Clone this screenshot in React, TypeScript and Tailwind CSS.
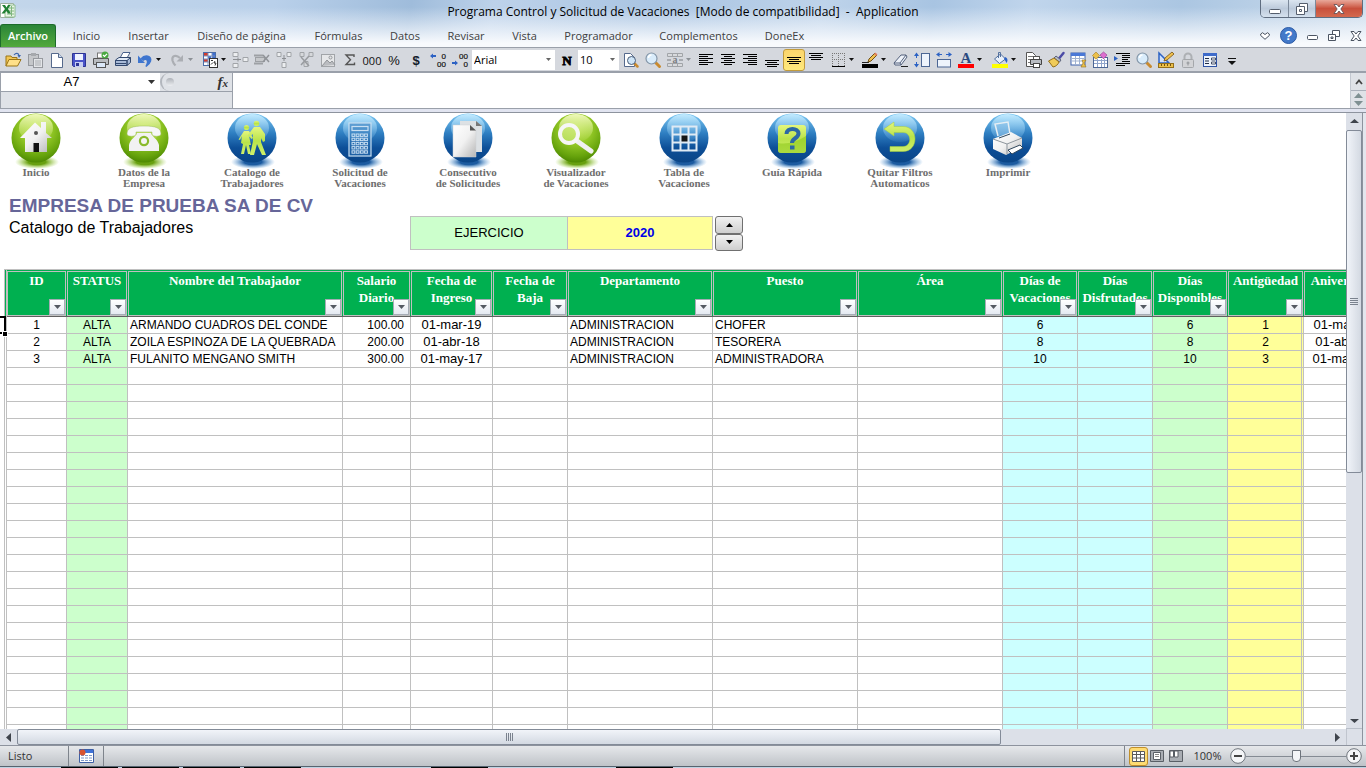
import type { ReactNode } from 'react'

const tabs = [
  { label: 'Inicio', width: 'w-[57px]' },
  { label: 'Insertar', width: 'w-[67px]' },
  { label: 'Diseño de página', width: 'w-[119px]' },
  { label: 'Fórmulas', width: 'w-[75px]' },
  { label: 'Datos', width: 'w-[58px]' },
  { label: 'Revisar', width: 'w-[64px]' },
  { label: 'Vista', width: 'w-[53px]' },
  { label: 'Programador', width: 'w-[95px]' },
  { label: 'Complementos', width: 'w-[105px]' },
  { label: 'DoneEx', width: 'w-[67px]' },
]

/* ---------- toolbar ---------- */

function Tool({ label, active, children }: { label: string; active?: boolean; children: ReactNode }) {
  return (
    <button
      type="button"
      aria-label={label}
      className={`flex h-[22px] w-[22px] shrink-0 items-center justify-center rounded-[3px] border ${
        active ? 'border-[#c29b3c] bg-linear-to-b from-[#fbd56c] to-[#ffe97c]' : 'border-transparent'
      }`}
    >
      <svg width="16" height="16" viewBox="0 0 16 16" className="shrink-0 overflow-visible" fill="none">
        {children}
      </svg>
    </button>
  )
}

function Arrow({ label, width = 'w-2.5', off }: { label: string; width?: string; off?: boolean }) {
  return (
    <button type="button" aria-label={label} className={`flex h-[22px] shrink-0 items-center justify-start ${width}`}>
      <svg width="5" height="3" viewBox="0 0 5 3" className="shrink-0">
        <path d="M0 0h5L2.5 3z" fill={off ? '#8c9196' : '#111'} />
      </svg>
    </button>
  )
}

function Lines({ rows }: { rows: [number, number, number][] }) {
  return (
    <>
      {rows.map(([x, y, w]) => (
        <rect key={y} x={x} y={y} width={w} height="1" fill="#000" />
      ))}
    </>
  )
}

function Lens() {
  return (
    <>
      <path d="M10.5 10.5l4 4" stroke="#c98a2e" strokeWidth="3" strokeLinecap="round" />
      <circle cx="6.5" cy="6.5" r="5.5" fill="#d9ecfb" stroke="#8496a8" strokeWidth="1.2" />
      <path d="M3.5 6a3 3 0 013-3" stroke="#fff" strokeWidth="1.5" />
    </>
  )
}

function Page() {
  return (
    <>
      <path d="M2.5 1.5h7l4 4v10h-11z" fill="#fff" stroke="#55698c" />
      <path d="M9.5 1.5v4h4" fill="#cfdbee" stroke="#55698c" />
    </>
  )
}

function Digits({ top, bottom, arrow }: { top: string; bottom: string; arrow: 'left' | 'right' }) {
  return (
    <>
      <text x="16" y="7" textAnchor="end" fontSize="8" fontFamily="Liberation Sans, sans-serif" fill="#111" stroke="#111" strokeWidth=".2">{top}</text>
      <text x="16" y="15" textAnchor="end" fontSize="8" fontFamily="Liberation Sans, sans-serif" fill="#111" stroke="#111" strokeWidth=".2">{bottom}</text>
      {arrow === 'left' ? (
        <path d="M0 4l3-2.5V3h3v2H3v1.5z" fill="#2c62c4" />
      ) : (
        <path d="M6 11L3 8.5V10H0v2h3v1.5z" fill="#2c62c4" />
      )}
    </>
  )
}

function Toolbar() {
  return (
    <div className="flex h-[26px] shrink-0 items-center border-t border-b-2 border-[#9aa0aa] bg-[#d5d8de] pl-0.5">
      <Tool label="Abrir">
        <path d="M1 14V4h5l1 1.5h5V8" fill="#f3c653" stroke="#9a7416" />
        <path d="M1 14l3-6.5h12L12.5 14z" fill="#ffe08a" stroke="#9a7416" />
        <path d="M9 3c2-2.5 4.5-2 5 .5" stroke="#3e66ad" strokeWidth="1.2" />
        <path d="M12.5 3h3.5l-2 3z" fill="#3e66ad" />
      </Tool>
      <Tool label="Pegar">
        <rect x="1.5" y="2.5" width="10" height="11" fill="#c5c7ca" stroke="#96999e" />
        <rect x="4" y="1" width="5" height="3" fill="#a6a9ad" />
        <rect x="6.5" y="6.5" width="9" height="9" fill="#e3e5e8" stroke="#96999e" />
        <path d="M8 9h6M8 11h6M8 13h6" stroke="#a9acb0" />
      </Tool>
      <Tool label="Nuevo"><Page /></Tool>
      <Tool label="Guardar">
        <path d="M1.5 1.5h13v13h-12l-1-1z" fill="#4a54c8" stroke="#2d3494" />
        <rect x="4" y="2" width="8" height="6" fill="#eef2ff" />
        <rect x="4" y="10" width="8" height="5" fill="#c8cff2" />
        <rect x="5" y="11" width="3" height="3" fill="#2d3494" />
      </Tool>
      <Tool label="Impresión rápida">
        <rect x="4.5" y="1" width="7" height="5" fill="#fff" stroke="#777" />
        <path d="M.5 6.5h15v6H.5z" fill="#b9bcc0" stroke="#555" />
        <rect x="3.5" y="10.5" width="9" height="5" fill="#dbe8f8" stroke="#555" />
        <circle cx="12" cy="3" r="3.5" fill="#49a942" />
        <path d="M10 3l1.5 1.5L14 1.8" stroke="#fff" strokeWidth="1.2" />
      </Tool>
      <Tool label="Imprimir">
        <path d="M5 6l3-5.5h7L12 6z" fill="#fff" stroke="#4a618c" />
        <path d="M.5 8L4 5.5h11.5L12 9H.5z" fill="#e1e9f5" stroke="#33496f" />
        <path d="M.5 8.5h11.5v5H.5zM12 8.5l3.5-3v5L12 13.5z" fill="#a9bbd8" stroke="#33496f" />
        <path d="M1 11.5h10" stroke="#33496f" />
      </Tool>
      <Tool label="Deshacer">
        <path d="M4 7c4-5 11-3 9.5 2-.8 2.5-2.500 4-4.500 5.500 1.500-3 2.500-6 .5-7-1.500-.7-2.500 0-3.500 1" fill="#3f76cf" stroke="#3f76cf" strokeWidth="1.5" />
        <path d="M1 3.5V11h7z" fill="#3f76cf" />
      </Tool>
      <Arrow label="Opciones de deshacer" />
      <Tool label="Rehacer">
        <path d="M11 6C7 2 2.5 4 3.5 8.5c.5 2 1.5 3.5 3 5" stroke="#abaeb3" strokeWidth="2.2" />
        <path d="M14 3v6.5H7.5z" fill="#abaeb3" />
      </Tool>
      <Arrow label="Opciones de rehacer" width="w-[11px]" off />
      <Tool label="Formato condicional">
        <rect x="1.5" y=".5" width="12" height="13" fill="#fff" stroke="#4d6ea8" />
        <rect x="2" y="1" width="4" height="3" fill="#d23b2c" /><rect x="2" y="7" width="4" height="3" fill="#d23b2c" />
        <rect x="6" y="4" width="3" height="3" fill="#3f6fd1" /><rect x="10" y="1" width="3" height="5" fill="#3f6fd1" />
        <path d="M2 4h11M2 7h11M2 10h11M6 1v12M10 1v12" stroke="#7d94bd" />
        <rect x="7.5" y="6.5" width="8" height="9" fill="#fff" stroke="#333" />
        <path d="M9 8.5h2M9 12.5l2-2M13 9l-1 2h2l-1 2.5" stroke="#333" />
      </Tool>
      <Arrow label="Opciones de formato" width="w-2" />
      <Tool label="Insertar filas">
        <path d="M1 .5h5v4H1zM1 11.5h5v4H1zM11 5.5h5v4h-5z" fill="#eceef0" stroke="#a1a4a8" />
        <path d="M1 7.5h8M6 5.5v4" stroke="#8b8e92" />
      </Tool>
      <Tool label="Eliminar filas">
        <path d="M0 3.5h9M0 11.5h9" stroke="#9da0a4" strokeWidth="2" />
        <rect x="1.5" y="5.5" width="9" height="4" fill="#c6c8cb" stroke="#9da0a4" />
        <path d="M9 3l6 7M15 3L9 10" stroke="#909398" strokeWidth="1.5" />
      </Tool>
      <Tool label="Insertar columnas">
        <path d="M1 .5h4v4H1zM11 .5h4v4h-4zM6 10.5h4v5H6z" fill="#eceef0" stroke="#a1a4a8" />
        <path d="M8 3v6M6 6.5h4" stroke="#8b8e92" />
      </Tool>
      <Tool label="Eliminar columnas">
        <path d="M2 .5h4v4H2zM11 .5h4v4h-4zM6 9.5h4v5H6z" fill="#d6d8db" stroke="#a1a4a8" />
        <path d="M3 5l8 9M11 4l-8 9" stroke="#989b9f" strokeWidth="1.5" />
      </Tool>
      <Tool label="Imagen">
        <rect x="1.5" y="2.5" width="13" height="12" fill="#e6e7e9" stroke="#a1a4a8" />
        <path d="M2 14l5-6 3 3 2-2 3 4" fill="#babcc0" stroke="#93969a" />
        <circle cx="10.5" cy="5.5" r="1.5" stroke="#93969a" />
      </Tool>
      <Tool label="Autosuma">
        <path d="M12 5V3H4l4.5 4.8L4 12.5h8.5v-2" stroke="#555" strokeWidth="1.4" />
      </Tool>
      <Tool label="Millares">
        <text x="8" y="13" textAnchor="middle" fontSize="11" fontFamily="Open Sans, sans-serif" fill="#111">000</text>
      </Tool>
      <Tool label="Porcentaje">
        <text x="8" y="13" textAnchor="middle" fontSize="13" fontFamily="Liberation Sans, sans-serif" fill="#111">%</text>
      </Tool>
      <Tool label="Moneda">
        <text x="8" y="13" textAnchor="middle" fontSize="13" fontWeight="bold" fontFamily="Liberation Sans, sans-serif" fill="#14202c">$</text>
      </Tool>
      <Tool label="Aumentar decimales"><Digits top="0" bottom="00" arrow="left" /></Tool>
      <Tool label="Disminuir decimales"><Digits top="00" bottom="0" arrow="right" /></Tool>

      <div className="relative ml-px h-5 w-[83px] shrink-0">
        <select aria-label="Fuente" defaultValue="Arial" className="block h-5 w-full appearance-none bg-white pl-0.5 font-['Open_Sans',sans-serif] text-[11px] leading-5 text-black">
          <option>Arial</option>
        </select>
        <svg width="5" height="3" viewBox="0 0 5 3" className="pointer-events-none absolute top-2 right-1"><path d="M0 0h5L2.5 3z" fill="#666" /></svg>
      </div>
      <Tool label="Negrita">
        <text x="9" y="13" textAnchor="middle" fontSize="13" fontWeight="bold" fontFamily="Liberation Serif, serif" fill="#000" stroke="#000" strokeWidth=".8">N</text>
      </Tool>
      <div className="relative mr-px ml-px h-5 w-[41px] shrink-0">
        <select aria-label="Tamaño de fuente" defaultValue="10" className="block h-5 w-full appearance-none bg-white pl-0.5 font-['Open_Sans',sans-serif] text-[11px] leading-5 text-black">
          <option>10</option>
        </select>
        <svg width="5" height="3" viewBox="0 0 5 3" className="pointer-events-none absolute top-2 right-1"><path d="M0 0h5L2.5 3z" fill="#666" /></svg>
      </div>

      <Tool label="Vista preliminar">
        <path d="M1.5 1.5h6l4 4v9h-10z" fill="#fff" stroke="#55698c" />
        <path d="M11.5 11.5l3 3" stroke="#c98a2e" strokeWidth="2.5" strokeLinecap="round" />
        <circle cx="8.5" cy="8.5" r="4" fill="#cfe5f7" stroke="#4a5d78" />
      </Tool>
      <Tool label="Zoom"><Lens /></Tool>
      <Tool label="Combinar y centrar">
        <path d="M.5 1.5h15v3H.5zM.5 11.5h15v3H.5z" fill="#d8dadd" stroke="#a1a4a8" />
        <path d="M5.5 1.5v3M10.5 1.5v3M5.5 11.5v3M10.5 11.5v3" stroke="#a1a4a8" />
        <path d="M0 8h4M12 8h4" stroke="#7b7e82" />
        <text x="8" y="11" textAnchor="middle" fontSize="10" fontWeight="bold" fontFamily="Liberation Serif, serif" fill="#7b7e82">a</text>
      </Tool>
      <Arrow label="Opciones de combinar" width="w-[9px]" off />
      <Tool label="Alinear a la izquierda"><Lines rows={[[1, 2, 14], [1, 4, 9], [1, 6, 14], [1, 8, 9], [1, 10, 14], [1, 12, 9]]} /></Tool>
      <Tool label="Centrar"><Lines rows={[[1, 2, 14], [4, 4, 8], [1, 6, 14], [4, 8, 8], [1, 10, 14], [4, 12, 8]]} /></Tool>
      <Tool label="Alinear a la derecha"><Lines rows={[[1, 2, 14], [6, 4, 9], [1, 6, 14], [6, 8, 9], [1, 10, 14], [6, 12, 9]]} /></Tool>
      <Tool label="Alinear en la parte inferior"><Lines rows={[[1, 8, 14], [3, 10, 10], [1, 12, 14], [3, 14, 10]]} /></Tool>
      <Tool label="Alinear en el medio" active><Lines rows={[[1, 5, 14], [3, 7, 10], [1, 9, 14], [3, 11, 10]]} /></Tool>
      <Tool label="Alinear en la parte superior"><Lines rows={[[1, 1, 14], [3, 3, 10], [1, 5, 14], [3, 7, 10]]} /></Tool>
      <Tool label="Bordes">
        <path d="M2 1.5h13M2 7.5h13M2.5 1v13M8.5 1v13M14.5 1v13" stroke="#777" strokeDasharray="1 1" />
        <path d="M2 14.5h13" stroke="#000" />
      </Tool>
      <Arrow label="Opciones de bordes" />
      <Tool label="Color de línea">
        <path d="M0 10.5h7" stroke="#222" />
        <path d="M6 10l1-3 6-6 2 2-6 6z" fill="#f0c04e" stroke="#735112" />
        <path d="M12 2l2 2 1.5-1.5-2-2z" fill="#e07f62" />
        <rect x="0" y="12" width="16" height="4" fill="#000" />
      </Tool>
      <Arrow label="Opciones de línea" width="w-2" />
      <Tool label="Borrar">
        <path d="M2 11l7-8h5l1 2-6 8H3z" fill="#eef2f9" stroke="#53617c" />
        <path d="M2 11h6l6-8M8 11l1 2" stroke="#53617c" />
        <path d="M9 14.5h7" stroke="#222" />
      </Tool>
      <Tool label="Alto de fila">
        <rect x="7.5" y="1.5" width="8" height="13" fill="#eef4fc" stroke="#4c6694" />
        <path d="M2.5 2v4M2.5 10v4" stroke="#2c62c4" />
        <path d="M0 4l2.5-3.5L5 4zM0 12l2.5 3.5L5 12z" fill="#2c62c4" />
      </Tool>
      <Tool label="Ancho de columna">
        <rect x="1.5" y="7.5" width="13" height="7.5" fill="#eef4fc" stroke="#4c6694" />
        <path d="M1 2.5h5M10 2.5h5" stroke="#2c62c4" />
        <path d="M3.5 0L0 2.5 3.5 5zM12.5 0L16 2.5 12.5 5z" fill="#2c62c4" />
      </Tool>
      <Tool label="Color de fuente">
        <text x="8" y="11" textAnchor="middle" fontSize="15" fontWeight="bold" fontFamily="Liberation Serif, serif" fill="#2b4a80">A</text>
        <rect x="0" y="12" width="16" height="4" fill="#f00" />
      </Tool>
      <Arrow label="Opciones de color de fuente" width="w-3" />
      <Tool label="Color de relleno">
        <path d="M2.5 7l6-5 5 5-6 4.5z" fill="#e9f0fa" stroke="#53719f" />
        <path d="M6.5 6V.5h2V5" stroke="#53719f" />
        <path d="M13 5c3 1 3 4 1.5 6-1-2-1.5-3-2.5-4z" fill="#2c62c4" />
        <rect x="0" y="12" width="16" height="4" fill="#ff0" />
      </Tool>
      <Arrow label="Opciones de relleno" width="w-3" />
      <Tool label="Área de impresión">
        <path d="M.5.5h6l3 3v11h-9z" fill="#fff" stroke="#555" />
        <path d="M2 4.5h5M2 7.5h3M2 10.5h3" stroke="#777" />
        <rect x="7.5" y="4.5" width="6" height="3" fill="#fff" stroke="#555" />
        <path d="M4.5 7.5h11v5h-11z" fill="#b8bcc2" stroke="#444" />
        <rect x="7.5" y="11.5" width="6" height="4" fill="#fff" stroke="#444" />
      </Tool>
      <Tool label="Copiar formato">
        <path d="M15.5 1L11 6.5" stroke="#4b4ba6" strokeWidth="2.5" strokeLinecap="round" />
        <path d="M8 4l5 4-1.5 2-5.5-4z" fill="#b3b9c9" stroke="#5c6378" />
        <path d="M6 6L.5 9l4.5 6c3-.5 5-2.5 6-5z" fill="#f0cb58" stroke="#94701c" />
      </Tool>
      <Tool label="Tabla">
        <rect x="1" y="1" width="14" height="12" fill="#fff" stroke="#3e62ad" />
        <rect x="1" y="1" width="14" height="3" fill="#4a78d6" />
        <path d="M2 6.5h12M2 9h12M5.5 4v9M9.5 4v9" stroke="#9fb1d0" />
        <path d="M12 8h4l-2 3 2 4h-5l2-4z" fill="#ecc04a" stroke="#94701c" strokeWidth=".6" />
      </Tool>
      <Tool label="Calendario">
        <rect x="1.5" y="5.5" width="14" height="10" fill="#fff" stroke="#4c6694" />
        <path d="M2 8.5h13M2 11.5h13M5.5 7v8M9.5 7v8M12.5 7v8" stroke="#8fa4cb" />
        <path d="M4 0l3.5 3.5L4.500 7h-1L.5 3.500z" fill="#ecc04a" stroke="#a27c1e" strokeWidth=".6" strokeLinejoin="round" />
        <path d="M11.500 0L15 3l-3 3.500h-1L8 3z" fill="#dc6fd0" stroke="#93358a" strokeWidth=".6" strokeLinejoin="round" />
      </Tool>
      <Tool label="Aumentar sangría">
        <Lines rows={[[2, 1, 14], [8, 3, 8], [8, 5, 8], [8, 7, 6], [8, 9, 8], [2, 11, 14], [2, 13, 9]]} />
        <path d="M0 4l4 2.5L0 9z" fill="#2c62c4" />
      </Tool>
      <Tool label="Buscar"><Lens /></Tool>
      <Tool label="Modo diseño">
        <path d="M1 1v10h10z" fill="#cfe0fa" stroke="#2c62c4" strokeWidth="1.5" />
        <path d="M6 9l1-3 7-6 2 2-7 6z" fill="#f0c04e" stroke="#735112" strokeWidth=".8" />
        <rect x=".5" y="11.5" width="15" height="4" fill="#ecc04a" stroke="#94701c" />
        <path d="M3.5 12v2M6.5 12v2M9.5 12v2M12.5 12v2" stroke="#735112" />
      </Tool>
      <Tool label="Proteger hoja">
        <path d="M4.5 8V5a3.5 3.5 0 017 0v3" stroke="#adb0b4" strokeWidth="2" />
        <rect x="2.5" y="7.5" width="11" height="8" rx="1" fill="#d2d3d6" stroke="#a4a7ab" />
        <path d="M8 9.5v4M6.5 11h3" stroke="#8f9296" />
      </Tool>
      <Tool label="Formulario">
        <rect x="1.5" y="1.5" width="13" height="13" fill="#eef4fc" stroke="#2d52a4" />
        <rect x="1" y="1" width="14" height="3" fill="#3e6bca" />
        <path d="M3 6.5h4M3 9h4M3 11.5h4" stroke="#1f2c46" />
        <path d="M9.5 6h4v2h-4zM9.5 10h4v2h-4z" fill="#fff" stroke="#1f2c46" strokeWidth=".8" />
      </Tool>
      <Tool label="Personalizar barra">
        <path d="M4 6.500h8" stroke="#111" />
        <path d="M4 9h8l-4 4z" fill="#111" />
      </Tool>
    </div>
  )
}

/* ---------- navigation balls ---------- */

function Ball({ color, children }: { color: 'green' | 'blue'; children: ReactNode }) {
  return (
    <svg width="52" height="54" viewBox="0 0 52 54" className="shrink-0 overflow-visible">
      <ellipse cx="27" cy="49" rx="22" ry="7" fill={`url(#shadow-${color})`} />
      <circle cx="26" cy="25" r="24.5" fill={`url(#ball-${color})`} />
      <ellipse cx="26" cy="15" rx="17" ry="14" fill={`url(#gloss-${color})`} />
      {children}
    </svg>
  )
}

function BallDefs() {
  return (
    <svg width="0" height="0" className="absolute" aria-hidden="true">
      <defs>
        <radialGradient id="ball-green" cx=".5" cy=".3" r=".72">
          <stop offset="0" stopColor="#b4de45" /><stop offset=".45" stopColor="#93c826" />
          <stop offset=".8" stopColor="#66a30c" /><stop offset="1" stopColor="#4a8500" />
        </radialGradient>
        <linearGradient id="ball-blue" x1="0" y1="0" x2="0" y2="1">
          <stop offset="0" stopColor="#7cc8f3" /><stop offset=".4" stopColor="#2f7fc2" />
          <stop offset=".7" stopColor="#0d4f98" /><stop offset="1" stopColor="#0a4587" />
        </linearGradient>
        <linearGradient id="gloss-green" x1="0" y1="0" x2="0" y2="1">
          <stop offset="0" stopColor="#f4fbc4" stopOpacity=".95" /><stop offset="1" stopColor="#d8ef80" stopOpacity=".1" />
        </linearGradient>
        <linearGradient id="gloss-blue" x1="0" y1="0" x2="0" y2="1">
          <stop offset="0" stopColor="#c6ecff" stopOpacity=".95" /><stop offset="1" stopColor="#7cc0ee" stopOpacity=".1" />
        </linearGradient>
        <radialGradient id="shadow-green">
          <stop offset=".4" stopColor="#68a010" /><stop offset="1" stopColor="#a5d44a" stopOpacity="0" />
        </radialGradient>
        <radialGradient id="shadow-blue">
          <stop offset=".4" stopColor="#1c5ba0" /><stop offset="1" stopColor="#5da0dc" stopOpacity="0" />
        </radialGradient>
        <linearGradient id="silver" x1="0" y1="0" x2="1" y2="1">
          <stop offset="0" stopColor="#fff" /><stop offset=".5" stopColor="#f1f1f1" /><stop offset="1" stopColor="#b5b5b5" />
        </linearGradient>
        <linearGradient id="lime" x1="0" y1="0" x2="0" y2="1">
          <stop offset="0" stopColor="#e4f77e" /><stop offset=".5" stopColor="#b9e34a" /><stop offset="1" stopColor="#cff06a" />
        </linearGradient>
      </defs>
    </svg>
  )
}

const calcKeys = [0, 1, 2, 3, 4].flatMap((r) => [0, 1, 2, 3].map((c) => ({ x: 18 + c * 4.2, y: 21 + r * 4.2 })))

const navItems: { lines: string[]; color: 'green' | 'blue'; art: ReactNode }[] = [
  {
    lines: ['Inicio'],
    color: 'green',
    art: (
      <>
        <path d="M10 25L25 9.5l6 5.5V9h5v11l6 5h-5v14H15V25z" fill="url(#silver)" />
        <rect x="23.5" y="30" width="5.5" height="9" fill="#111" />
        <circle cx="26" cy="20" r="2" fill="#555" />
      </>
    ),
  },
  {
    lines: ['Datos de la', 'Empresa'],
    color: 'green',
    art: (
      <>
        <path d="M9 21c0-6 5-8 17-8s17 2 17 8c0 3-9 3-9 0v-2H18v2c0 3-9 3-9 0z" fill="#f7f7f7" stroke="#9abb5e" strokeWidth=".5" />
        <path d="M19 20h14c0 3 7 6 8 12v6H11v-6c1-6 8-9 8-12z" fill="#f2f2f2" />
        <circle cx="26" cy="28" r="5.2" fill="#8aba2c" /><circle cx="26" cy="28" r="3" fill="#f4f4f4" />
      </>
    ),
  },
  {
    lines: ['Catalogo de', 'Trabajadores'],
    color: 'blue',
    art: (
      <g fill="url(#lime)">
        <circle cx="20.5" cy="14.5" r="2.6" /><circle cx="30.5" cy="10.5" r="2.8" />
        <path d="M18 18h5l4 7-1.5 1-2.5-3 2 9h-2l2 9h-3l-2-9-2 9h-3l2-10-2-1 1-7-2 4-1.500-.5z" />
        <path d="M28 14h6l5 7v7l-2 1-2-4v4l5 13h-4l-5-11-3 11h-4l3-14v-7l-4 3-1.5-1.5z" />
      </g>
    ),
  },
  {
    lines: ['Solicitud de', 'Vacaciones'],
    color: 'blue',
    art: (
      <g stroke="#c8dff2" strokeWidth="1.2" fill="none">
        <rect x="15" y="10" width="22" height="33" fill="#2f76b8" fillOpacity=".5" />
        <rect x="18" y="13.5" width="16" height="4" />
        {calcKeys.map(({ x, y }) => <rect key={`${x}-${y}`} x={x} y={y} width="2.800" height="2.400" strokeWidth="1" />)}
      </g>
    ),
  },
  {
    lines: ['Consecutivo', 'de Solicitudes'],
    color: 'blue',
    art: (
      <>
        <path d="M18 8h16l6 5v26H18z" fill="#dde1e4" /><path d="M34 8v5h6z" fill="#777" />
        <path d="M11 12h17l6 5.5V44H11z" fill="url(#silver)" stroke="#cfd2d4" strokeWidth=".5" />
        <path d="M28 12v5.5h6z" fill="#555" />
      </>
    ),
  },
  {
    lines: ['Visualizador', 'de Vacaciones'],
    color: 'green',
    art: (
      <>
        <path d="M27 28l14 10" stroke="#f0f0f0" strokeWidth="5" strokeLinecap="round" />
        <circle cx="19" cy="21" r="9" fill="#c9e876" fillOpacity=".6" stroke="#f6f6f6" strokeWidth="4" />
      </>
    ),
  },
  {
    lines: ['Tabla de', 'Vacaciones'],
    color: 'blue',
    art: (
      <>
        <rect x="22" y="21" width="8" height="8" fill="#151515" />
        <path d="M14.5 13.5h24v24h-24zM22.5 13.5v24M30.5 13.5v24M14.5 21.5h24M14.5 29.5h24" stroke="#dfeaf4" strokeWidth="2" fill="none" />
      </>
    ),
  },
  {
    lines: ['Guía Rápida'],
    color: 'blue',
    art: (
      <>
        <rect x="12" y="12" width="28" height="28" rx="3" fill="url(#lime)" />
        <path d="M12 30c10 2 20-2 28-7v14a3 3 0 01-3 3H15a3 3 0 01-3-3z" fill="#86c414" fillOpacity=".5" />
        <path d="M20.5 21c0-7 12-6.5 12-.5 0 5-6.5 4.500-6.500 9.500" stroke="#2b68a5" strokeWidth="4" fill="none" />
        <rect x="24" y="32.5" width="4.5" height="4" fill="#2b68a5" />
      </>
    ),
  },
  {
    lines: ['Quitar Filtros', 'Automaticos'],
    color: 'blue',
    art: (
      <path d="M10 16l10-7v4.5h9c16 0 16 25 0 25H16v-5h13c9 0 9-14 0-14h-9V23z" fill="url(#lime)" stroke="#a5cf3c" strokeWidth=".5" />
    ),
  },
  {
    lines: ['Imprimir'],
    color: 'blue',
    art: (
      <>
        <path d="M16 23l-3-12 13-2 2 12" fill="#8fc2e8" fillOpacity=".5" stroke="#e6eef4" strokeWidth="1.5" />
        <path d="M11 26l18-7 11 6v9l-16 8-13-6z" fill="url(#silver)" />
        <path d="M11 26l14 5 15-6M25 31v10" stroke="#8d959c" fill="none" />
        <path d="M17 25l11-4M26 37l12-5 3 3-11 6z" stroke="#30475c" fill="#fff" />
      </>
    ),
  },
]

function NavBar() {
  return (
    <nav className="flex h-[81px] shrink-0 gap-9">
      {navItems.map(({ lines, color, art }) => (
        <a key={lines[0]} href="#" className="flex w-[72px] shrink-0 flex-col items-center text-center font-['Liberation_Serif',serif] text-[11px] leading-[11px] font-bold whitespace-nowrap text-[#6e6e6e]">
          <Ball color={color}>{art}</Ball>
          {lines.map((line) => (
            <span key={line}>{line}</span>
          ))}
        </a>
      ))}
    </nav>
  )
}

/* ---------- employee table ---------- */

const columns = [
  { title: ['ID'], col: 'w-[60px]', cell: 'text-center' },
  { title: ['STATUS'], col: 'w-[61px]', cell: 'text-center bg-[#ccffcc]' },
  { title: ['Nombre del Trabajador'], col: 'w-[215px]', cell: 'pl-0.5' },
  { title: ['Salario', 'Diario'], col: 'w-[68px]', cell: 'text-right pr-1.5' },
  { title: ['Fecha de', 'Ingreso'], col: 'w-[82px]', cell: 'text-center text-[13px]' },
  { title: ['Fecha de', 'Baja'], col: 'w-[75px]', cell: 'text-center' },
  { title: ['Departamento'], col: 'w-[145px]', cell: 'pl-0.5' },
  { title: ['Puesto'], col: 'w-[145px]', cell: 'pl-0.5' },
  { title: ['Área'], col: 'w-[145px]', cell: '' },
  { title: ['Días de', 'Vacaciones'], col: 'w-[75px]', cell: 'text-center bg-[#ccffff]' },
  { title: ['Días', 'Disfrutados'], col: 'w-[75px]', cell: 'text-center bg-[#ccffff]' },
  { title: ['Días', 'Disponibles'], col: 'w-[75px]', cell: 'text-center bg-[#ccffcc]' },
  { title: ['Antigüedad'], col: 'w-[76px]', cell: 'text-center bg-[#ffff99] shadow-[inset_-1px_0_#ffff99,inset_-2px_0_#c0c0c0]' },
  { title: ['Aniversario'], col: 'w-[80px]', cell: 'text-center text-[13px]' },
]

const employees = [
  ['1', 'ALTA', 'ARMANDO CUADROS DEL CONDE', '100.00', '01-mar-19', '', 'ADMINISTRACION', 'CHOFER', '', '6', '', '6', '1', '01-mar-20'],
  ['2', 'ALTA', 'ZOILA ESPINOZA DE LA QUEBRADA', '200.00', '01-abr-18', '', 'ADMINISTRACION', 'TESORERA', '', '8', '', '8', '2', '01-abr-20'],
  ['3', 'ALTA', 'FULANITO MENGANO SMITH', '300.00', '01-may-17', '', 'ADMINISTRACION', 'ADMINISTRADORA', '', '10', '', '10', '3', '01-may-20'],
]

const rows = Array.from({ length: 25 }, (_, i) => employees[i] ?? [])

function EmployeeTable() {
  return (
    <div className="relative min-h-0 flex-1 overflow-hidden pl-1">
      <div className="w-max border-l border-[#c0c0c0]">
        <div className="border-t border-[#c0c0c0] bg-linear-to-b from-[#00b050] from-[46px] to-white to-[46px] pl-px">
          <table className="w-[1378px] table-fixed border-separate border-spacing-0 border-l border-[#c0c0c0] text-black">
            <colgroup>
              {columns.map((c) => (
                <col key={c.title.join()} className={c.col} />
              ))}
            </colgroup>
            <thead>
              <tr>
                {columns.map((c) => (
                  <th key={c.title.join()} scope="col" className="h-[47px] border-b border-[#606060] bg-[#00b050] p-0 pt-px pr-px">
                    <div className="relative h-[45px] border border-[#c0c0c0] font-['Liberation_Serif',serif] text-[13px] leading-[17px] font-bold whitespace-nowrap text-white">
                      {c.title.map((line) => (
                        <span key={line} className="-mx-1 block">{line}</span>
                      ))}
                      <button type="button" aria-label={`Filtrar ${c.title.join(' ')}`} className="absolute right-0 bottom-0 flex h-4 w-4 items-center justify-center border border-[#a5acb5] bg-linear-to-b from-white to-[#e4e9f1]">
                        <svg width="7" height="4" viewBox="0 0 7 4"><path d="M0 0h7L3.5 4z" fill="#555a62" /></svg>
                      </button>
                    </div>
                  </th>
                ))}
              </tr>
            </thead>
            <tbody className="font-['Liberation_Sans',Arial,sans-serif] text-[12px] leading-4">
              {rows.map((row, r) => (
                <tr key={r}>
                  {columns.map((c, i) => (
                    <td key={c.title.join()} className={`h-[17px] border-r border-b border-[#c0c0c0] whitespace-nowrap ${c.cell}`}>
                      <div className="h-4">{row[i]}</div>
                    </td>
                  ))}
                </tr>
              ))}
            </tbody>
          </table>
        </div>
      </div>
      {/* active cell marker */}
      <div className="absolute top-[47px] left-0 h-[18px] w-1.5 border-2 border-l-0 border-black" />
      <div className="absolute top-[62px] left-0.5 h-[6px] w-[6px] border border-white bg-black" />
    </div>
  )
}

function Triangle({ dir }: { dir: 'up' | 'down' | 'left' | 'right' }) {
  const d = { up: 'M0 6l4.5-4 4.5 4z', down: 'M0 3h9l-4.5 4z', left: 'M7 0v9L2 4.5z', right: 'M2 0v9l5-4.5z' }[dir]
  return (
    <svg width="9" height="9" viewBox="0 0 9 9" className="shrink-0">
      <path d={d} fill="#3f444c" />
    </svg>
  )
}

function Sheet() {
  return (
    <main className="flex min-h-0 flex-1 bg-white">
      <div className="flex min-w-0 flex-1 flex-col overflow-hidden">
        <NavBar />
        <div className="flex h-[75px] shrink-0 font-['Liberation_Sans',Arial,sans-serif]">
          <div className="w-[410px] shrink-0 pt-px pl-[9px]">
            <h1 className="text-[19px] leading-[22px] font-bold whitespace-nowrap text-[#666699]">EMPRESA DE PRUEBA SA DE CV</h1>
            <p className="text-[16px] leading-[22px] text-black">Catalogo de Trabajadores</p>
          </div>
          <div className="mt-[22px] flex h-[34px] border border-[#c0c0c0]">
            <label htmlFor="ejercicio" className="flex w-[157px] items-center justify-center border-r border-[#c0c0c0] bg-[#ccffcc] text-[13px] text-black">EJERCICIO</label>
            <input id="ejercicio" defaultValue="2020" className="w-[144px] bg-[#ffff99] text-center text-[13px] font-bold text-[#0000e6]" />
          </div>
          <div className="mt-[22px] ml-0.5 flex h-[35px] w-7 flex-col">
            <button type="button" aria-label="Año siguiente" className="flex flex-1 items-center justify-center rounded-[3px] border border-[#707070] bg-linear-to-b from-[#f2f2f2] to-[#cfcfcf]">
              <svg width="7" height="4" viewBox="0 0 7 4"><path d="M0 4h7L3.5 0z" fill="#000" /></svg>
            </button>
            <button type="button" aria-label="Año anterior" className="flex flex-1 items-center justify-center rounded-[3px] border border-[#707070] bg-linear-to-b from-[#f2f2f2] to-[#cfcfcf]">
              <svg width="7" height="4" viewBox="0 0 7 4"><path d="M0 0h7L3.5 4z" fill="#000" /></svg>
            </button>
          </div>
        </div>
        <EmployeeTable />
      </div>

      {/* vertical scroll bar */}
      <div className="flex w-4 shrink-0 flex-col bg-[#dce0e8]">
        <button type="button" aria-label="Subir" className="flex h-[17px] items-center justify-center"><Triangle dir="up" /></button>
        <div className="flex min-h-0 flex-1 flex-col">
          <div className="flex h-[59%] flex-col items-center justify-center gap-px rounded-[2px] border border-[#838b98] bg-linear-to-r from-[#f1f4f9] to-[#d3d9e2]">
            {[0, 1, 2, 3].map((i) => (
              <span key={i} className="h-px w-2 bg-[#7a828e]" />
            ))}
          </div>
        </div>
        <button type="button" aria-label="Bajar" className="flex h-[17px] items-center justify-center border-b border-[#b9bfc9]"><Triangle dir="down" /></button>
      </div>
      <div className="w-1 shrink-0 border-l border-[#8d939e] bg-[#e3e6ed]" />
    </main>
  )
}

/* ---------- window chrome ---------- */

function TitleBar() {
  return (
    <div className="grid h-6 shrink-0 grid-cols-[1fr_auto_1fr] items-start">
      <svg width="16" height="16" viewBox="0 0 16 16" className="mt-0.5">
        <path d="M.5 1.5h13v14H.5z" fill="#fff" stroke="#9fb3a3" />
        <path d="M8 3h7v12H5V10" fill="#e8f4e6" stroke="#7fb57c" strokeWidth=".8" />
        <path d="M9 6h5M9 9h5M7 12h7M11.5 4v10" stroke="#7fb57c" />
        <path d="M2 3h3l1.5 2.5L8 3h2.5L8 7l3 4.5H8L6.3 9 4.5 11.5h-3L5 7z" fill="#208034" />
      </svg>
      <div className="font-['Open_Sans',sans-serif] text-[12px] leading-6 whitespace-pre text-black">
        {'Programa Control y Solicitud de Vacaciones  [Modo de compatibilidad]  -  Application'}
      </div>
      <div className="mr-[3px] flex h-[18px] justify-self-end overflow-hidden rounded-b-[5px] border border-t-0 border-[#5f6d80]">
        <button type="button" aria-label="Minimizar" className="flex w-7 items-center justify-center border-r border-[#7c899a] bg-linear-to-b from-[#dbe5f0] via-[#bccadb] to-[#d5e1ee]">
          <svg width="12" height="12" viewBox="0 0 12 12"><rect x=".5" y="6.5" width="11" height="4" rx="1" fill="#fff" stroke="#555e6d" /></svg>
        </button>
        <button type="button" aria-label="Restaurar" className="flex w-[27px] items-center justify-center border-r border-[#7c899a] bg-linear-to-b from-[#dbe5f0] via-[#bccadb] to-[#d5e1ee]">
          <svg width="12" height="12" viewBox="0 0 12 12" fill="#fff" stroke="#555e6d"><path d="M3.5.5h8v8h-8z" /><path d="M.5 3.5h8v8h-8z" /><path d="M3.5 6.5h2v2h-2z" /></svg>
        </button>
        <button type="button" aria-label="Cerrar" className="flex w-[46px] items-center justify-center bg-linear-to-b from-[#e8a89a] via-[#c8503c] to-[#d4694e]">
          <svg width="12" height="10" viewBox="0 0 12 10"><path d="M1 .5h3l2 2.5L8 .5h3L7.8 5 11 9.5H8L6 7 4 9.5H1L4.2 5z" fill="#fff" stroke="#5b4a50" strokeWidth=".8" /></svg>
        </button>
      </div>
    </div>
  )
}

function Tabs() {
  return (
    <div className="flex h-[23px] shrink-0 items-stretch font-['Open_Sans',sans-serif] text-[11px] text-[#404040]">
      <button type="button" className="w-14 rounded-t-[3px] border border-b-0 border-[#1d6b2b] bg-linear-to-b from-[#2a8538] to-[#52a93c] font-semibold text-white">Archivo</button>
      <div className="ml-0.5 flex">
        {tabs.map((t) => (
          <button key={t.label} type="button" className={`pt-px text-center whitespace-nowrap ${t.width}`}>{t.label}</button>
        ))}
      </div>
      <div className="mr-1 ml-auto flex items-center gap-2.5 text-[#4b5462]">
        <button type="button" aria-label="Minimizar cinta">
          <svg width="10" height="8" viewBox="0 0 10 8" fill="#fff" stroke="currentColor"><path d="M.7 2L2.5.7 5 2.500 7.500.7 9.300 2v1.500L5 7.300.7 3.500z" /></svg>
        </button>
        <button type="button" aria-label="Ayuda">
          <svg width="17" height="17" viewBox="0 0 17 17">
            <circle cx="8.5" cy="8.5" r="8" fill="#4379c9" stroke="#2c5aa5" />
            <text x="8.5" y="13" textAnchor="middle" fontSize="13" fontWeight="bold" fontFamily="Liberation Sans, sans-serif" fill="#fff">?</text>
          </svg>
        </button>
        <button type="button" aria-label="Minimizar libro">
          <svg width="11" height="12" viewBox="0 0 11 12"><rect x=".5" y="5.5" width="10" height="4" rx="1" fill="#fff" stroke="currentColor" /></svg>
        </button>
        <button type="button" aria-label="Restaurar libro">
          <svg width="12" height="11" viewBox="0 0 12 11" fill="#fff" stroke="currentColor"><path d="M4.5.5h7v6h-7z" /><path d="M.5 4.5h7v6h-7z" /><path d="M3 7h2v1.5H3z" /></svg>
        </button>
        <button type="button" aria-label="Cerrar libro">
          <svg width="12" height="10" viewBox="0 0 12 10"><path d="M1 .5h3l2 2.5L8 .5h3L7.8 5 11 9.5H8L6 7 4 9.5H1L4.2 5z" fill="#fff" stroke="currentColor" /></svg>
        </button>
      </div>
    </div>
  )
}

function FormulaBar() {
  return (
    <div className="flex h-9 shrink-0 border-b border-[#9aa0aa] bg-[#dfe2e7]">
      <div className="flex w-[233px] shrink-0 flex-col border-r border-l border-[#9aa0aa]">
        <div className="flex h-[19px] border-b border-[#9aa0aa]">
          <input aria-label="Cuadro de nombres" defaultValue="A7" className="w-[141px] bg-white text-center font-['Liberation_Sans',Arial,sans-serif] text-[13px] text-black" />
          <button type="button" aria-label="Lista de nombres" className="flex w-[18px] items-center justify-center bg-white">
            <svg width="7" height="4" viewBox="0 0 7 4"><path d="M0 0h7L3.5 4z" fill="#333" /></svg>
          </button>
          <div className="flex flex-1 items-center justify-between rounded-l-full border-l-2 border-[#b2b6bd] pr-1 pl-1">
            <span className="h-2 w-2 rounded-full bg-linear-to-b from-[#aeb2b9] to-[#eceef1]" />
            <button type="button" aria-label="Insertar función" className="font-['Liberation_Serif',serif] text-[15px] leading-4 font-bold text-[#333] italic">
              f<span className="text-[11px]">x</span>
            </button>
          </div>
        </div>
      </div>
      <textarea aria-label="Barra de fórmulas" className="min-w-0 flex-1 resize-none bg-white" />
      <div className="flex w-4 shrink-0 flex-col border-l border-[#c3c8d0]">
        <button type="button" aria-label="Contraer" className="flex h-[18px] items-center justify-center border-b border-[#aab0ba]">
          <svg width="8" height="6" viewBox="0 0 8 6"><path d="M1 5l3-3.5L7 5" fill="none" stroke="#444" strokeWidth="1.8" /></svg>
        </button>
        <button type="button" aria-label="Línea anterior" className="flex flex-1 items-center justify-center">
          <svg width="9" height="5" viewBox="0 0 9 5"><path d="M0 5l4.5-5L9 5z" fill="#7f9092" /></svg>
        </button>
        <button type="button" aria-label="Línea siguiente" className="flex flex-1 items-center justify-center">
          <svg width="9" height="5" viewBox="0 0 9 5"><path d="M0 0h9L4.5 5z" fill="#7f9092" /></svg>
        </button>
      </div>
    </div>
  )
}

function HorizontalScroll() {
  return (
    <div className="flex h-[17px] shrink-0 border-b border-[#8d939e] bg-[#dce0e8]">
      <button type="button" aria-label="Izquierda" className="flex w-[17px] items-center justify-center"><Triangle dir="left" /></button>
      <div className="flex min-w-0 flex-1">
        <div className="flex w-[75%] items-center justify-center gap-px rounded-[2px] border border-[#838b98] bg-linear-to-b from-[#f1f4f9] to-[#d3d9e2]">
          {[0, 1, 2, 3].map((i) => (
            <span key={i} className="h-2 w-px bg-[#7a828e]" />
          ))}
        </div>
      </div>
      <button type="button" aria-label="Derecha" className="flex w-[17px] items-center justify-center"><Triangle dir="right" /></button>
      <div className="w-4 border-l border-[#c0c5ce]" />
      <div className="w-1 border-l border-[#8d939e] bg-[#e3e6ed]" />
    </div>
  )
}

function StatusBar() {
  return (
    <footer className="flex h-5 shrink-0 items-center bg-linear-to-b from-[#e6e8eb] to-[#bfc3c8] font-['Open_Sans',sans-serif] text-[11px] text-[#333]">
      <span className="w-[69px] border-r border-[#7e848c] pl-2 leading-5">Listo</span>
      <button type="button" aria-label="Grabar macro" className="flex h-5 w-[35px] items-center justify-center border-r border-[#7e848c]">
        <svg width="15" height="14" viewBox="0 0 15 14">
          <path d="M.5.5h14v13H.5z" fill="#fff" stroke="#3d5fa5" /><path d="M1 1h13v3H1z" fill="#3f72d8" />
          <path d="M2 6.5h11M2 9h11M2 11.5h11" stroke="#7f99c9" strokeDasharray="3 1" />
          <circle cx="3.5" cy="3.5" r="3" fill="#d9532f" />
        </svg>
      </button>
      <div className="ml-auto flex h-5 items-center border-l border-[#7e848c] pl-1">
        <button type="button" aria-label="Normal" className="flex h-[19px] w-[19px] items-center justify-center rounded-[3px] border border-[#c08f2c] bg-[#ffdc72]">
          <svg width="13" height="11" viewBox="0 0 13 11"><path d="M.5.5h12v10H.5zM4.5.5v10M8.5.5v10M.5 3.5h12M.5 7h12" fill="#fff" stroke="#5a5a5a" /></svg>
        </button>
        <button type="button" aria-label="Diseño de página" className="flex h-[19px] w-[18px] items-center justify-center">
          <svg width="14" height="12" viewBox="0 0 14 12"><path d="M.5.5h13v11H.5z" fill="#a9adb3" stroke="#5a5f66" /><path d="M3.5 2.5h7v7h-7z" fill="#fff" stroke="#5a5f66" /><path d="M5 4.5h4M5 6.5h4" stroke="#888" /></svg>
        </button>
        <button type="button" aria-label="Salto de página" className="flex h-[19px] w-[19px] items-center justify-center">
          <svg width="14" height="12" viewBox="0 0 14 12"><path d="M.5.5h13v11H.5z" fill="#a9adb3" stroke="#5a5f66" /><path d="M1 1h3.5v6H1zM5.5 1H9v6H5.5z" fill="#fff" stroke="#5a5f66" /></svg>
        </button>
        <span className="w-[45px] text-center">100%</span>
        <button type="button" aria-label="Alejar" className="w-4">
          <svg width="16" height="16" viewBox="0 0 16 16"><circle cx="8" cy="8" r="7.3" fill="#f4f5f7" stroke="#6d737b" /><path d="M4 8h8" stroke="#444" strokeWidth="2" /></svg>
        </button>
        <input
          type="range"
          aria-label="Zoom"
          defaultValue="50"
          className="h-4 w-[100px] appearance-none bg-[linear-gradient(#858b93,#858b93)] bg-[length:100%_1px] bg-center bg-no-repeat [&::-webkit-slider-thumb]:h-3 [&::-webkit-slider-thumb]:w-[9px] [&::-webkit-slider-thumb]:appearance-none [&::-webkit-slider-thumb]:rounded-b-[4px] [&::-webkit-slider-thumb]:border [&::-webkit-slider-thumb]:border-[#6d737b] [&::-webkit-slider-thumb]:bg-[#f4f5f7]"
        />
        <button type="button" aria-label="Acercar" className="mr-1 w-4">
          <svg width="16" height="16" viewBox="0 0 16 16"><circle cx="8" cy="8" r="7.3" fill="#f4f5f7" stroke="#6d737b" /><path d="M4 8h8M8 4v8" stroke="#444" strokeWidth="2" /></svg>
        </button>
      </div>
    </footer>
  )
}

export default function App() {
  return (
    <div className="flex h-screen flex-col overflow-hidden bg-[#dce0e8]">
      <BallDefs />
      <header className="shrink-0 bg-[linear-gradient(to_bottom,transparent_15%,#f8fafd_92%),linear-gradient(100deg,#c3d6ea_0%,#b9d0ea_20%,#9fbcdb_30%,#bdd2ea_36%,#a9c4e2_48%,#bed3ea_60%,#a8c4e2_68%,#c0d5ec_75%,#abc6e2_86%,#cddded_100%)]">
        <TitleBar />
        <Tabs />
      </header>
      <Toolbar />
      <FormulaBar />
      <div className="h-1 shrink-0 border-b border-[#8d939e] bg-[#e1e4f0]" />
      <Sheet />
      <HorizontalScroll />
      <StatusBar />
      {/* edge of the taskbar */}
      <div className="flex h-0.5 shrink-0 gap-1 border-t border-[#56636f] bg-[#bfd3e2] pl-[61px]">
        {[0, 1, 2, 3].map((i) => (
          <span key={i} className="w-[57px] bg-black" />
        ))}
        <span className="ml-[126px] w-[57px] bg-black" />
        <span className="ml-[124px] w-[57px] bg-black" />
      </div>
    </div>
  )
}
